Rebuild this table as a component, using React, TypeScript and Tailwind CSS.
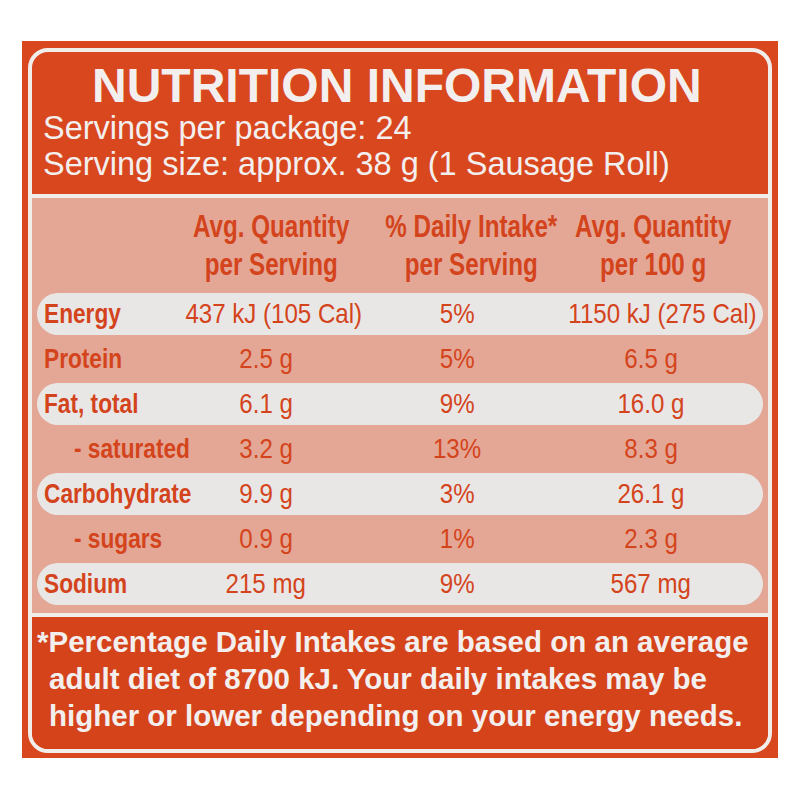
const rows = [
  { label: "Energy", a: "437 kJ (105 Cal)", b: "5%", c: "1150 kJ (275 Cal)", hi: true },
  { label: "Protein", a: "2.5 g", b: "5%", c: "6.5 g", hi: false },
  { label: "Fat, total", a: "6.1 g", b: "9%", c: "16.0 g", hi: true },
  { label: "- saturated", a: "3.2 g", b: "13%", c: "8.3 g", hi: false, sub: true },
  { label: "Carbohydrate", a: "9.9 g", b: "3%", c: "26.1 g", hi: true },
  { label: "- sugars", a: "0.9 g", b: "1%", c: "2.3 g", hi: false, sub: true },
  { label: "Sodium", a: "215 mg", b: "9%", c: "567 mg", hi: true },
];

// condensed look: Liberation Sans squeezed horizontally
function Squeeze({ children, left }: { children: React.ReactNode; left?: boolean }) {
  return (
    <span className={`inline-block scale-x-[0.86] ${left ? "origin-left" : "origin-center"}`}>
      {children}
    </span>
  );
}

export default function App() {
  return (
    <div className="w-[800px] h-[800px] bg-white pt-[41px] pl-[22px] font-['Liberation_Sans',Arial,sans-serif]">
      {/* orange panel */}
      <div className="w-[756px] h-[717px] bg-[#d8471e] pt-[7px] px-[6px] pb-[5px]">
        <div className="h-full border-[4px] border-[#f1edeb] rounded-[20px] overflow-hidden flex flex-col">
          {/* header */}
          <div className="pt-[10px] pb-[12px] text-[#f3efee]">
            <h1 className="pl-[60px] text-[48px] leading-[48px] font-bold">NUTRITION INFORMATION</h1>
            <p className="pl-[11px] text-[32.5px] leading-[36px]">Servings per package: 24</p>
            <p className="pl-[11px] text-[32.5px] leading-[36px]">Serving size: approx. 38 g (1 Sausage Roll)</p>
          </div>

          {/* table */}
          <div className="border-y-[4px] border-[#f1edeb] bg-[#e4a796] pt-[10px] pb-[8px] px-[5px] text-[#d4441c] whitespace-nowrap">
            <div className="grid grid-cols-[134px_190px_192px_196px] mb-[9px] text-[31px] leading-[38px] font-bold text-center">
              <div />
              <div><span className="inline-block scale-x-[0.78]">Avg. Quantity<br />per Serving</span></div>
              <div><span className="inline-block scale-x-[0.78]">% Daily Intake*<br />per Serving</span></div>
              <div><span className="inline-block scale-x-[0.78]">Avg. Quantity<br />per 100 g</span></div>
            </div>
            <div className="flex flex-col gap-[3px]">
              {rows.map((r) => (
                <div
                  key={r.label}
                  className={`grid grid-cols-[134px_190px_192px_196px] h-[42px] items-center rounded-full ${r.hi ? "bg-[#e9e7e6]" : ""}`}
                >
                  <div className={`text-[28px] font-bold ${r.sub ? "pl-[37px]" : "pl-[7px]"}`}>
                    <span className="inline-block scale-x-[0.81] origin-left">{r.label}</span>
                  </div>
                  <div className="text-[28px] text-center"><Squeeze>{r.a}</Squeeze></div>
                  <div className="text-[28px] text-center"><Squeeze>{r.b}</Squeeze></div>
                  <div className="text-[28px] text-center"><Squeeze>{r.c}</Squeeze></div>
                </div>
              ))}
            </div>
          </div>

          {/* footnote */}
          <div className="flex-1 bg-[#d5431b] pt-[6px] pl-[17px] pr-[6px] text-[#f3efee] text-[29.5px] leading-[37px] font-bold -indent-[12px]">
            *Percentage Daily Intakes are based on an average adult diet of 8700 kJ. Your daily intakes may be higher or lower depending on your energy needs.
          </div>
        </div>
      </div>
    </div>
  );
}
